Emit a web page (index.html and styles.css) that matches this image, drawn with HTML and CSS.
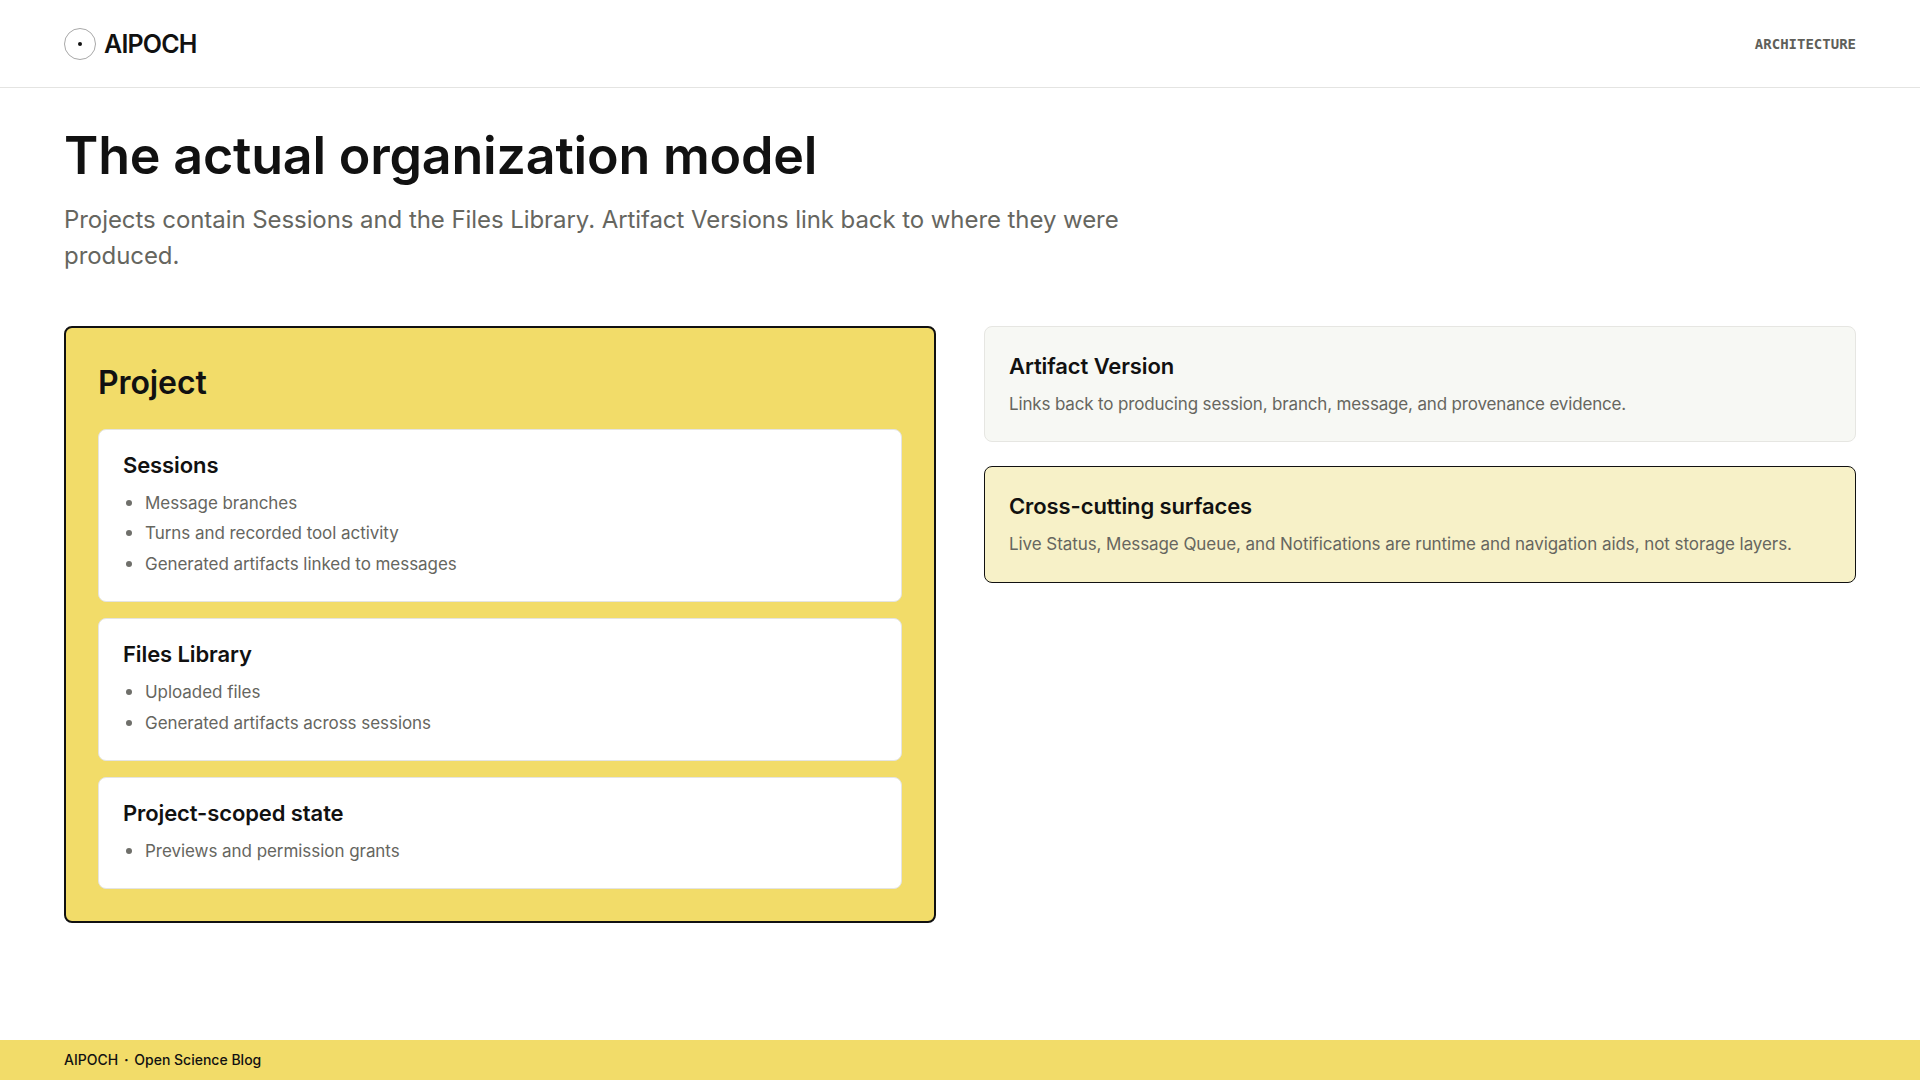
FILE: index.html
```html
<!DOCTYPE html>
<html lang="en">
<head>
<meta charset="utf-8">
<title>AIPOCH - Architecture</title>
<link rel="stylesheet" href="styles.css">
</head>
<body>
<div class="page">
  <header class="topbar">
    <div class="brand">
      <svg class="logo" width="32" height="32" viewBox="0 0 32 32" aria-hidden="true">
        <circle cx="16" cy="16" r="15.5" fill="none" stroke="#a8a8a8" stroke-width="1"/>
        <circle cx="16" cy="16" r="2" fill="#111"/>
      </svg>
      <span class="brand-name">AIPOCH</span>
    </div>
    <span class="section-tag">ARCHITECTURE</span>
  </header>
  <main class="content">
    <h1 class="title">The actual organization model</h1>
    <p class="lead">Projects contain Sessions and the Files Library. Artifact Versions link back to where they were produced.</p>
    <div class="columns">
      <section class="project">
        <h2 class="project-title">Project</h2>
        <div class="stack">
          <article class="inner">
            <h3 class="card-title">Sessions</h3>
            <ul class="list">
              <li>Message branches</li>
              <li>Turns and recorded tool activity</li>
              <li>Generated artifacts linked to messages</li>
            </ul>
          </article>
          <article class="inner">
            <h3 class="card-title">Files Library</h3>
            <ul class="list">
              <li>Uploaded files</li>
              <li>Generated artifacts across sessions</li>
            </ul>
          </article>
          <article class="inner">
            <h3 class="card-title">Project-scoped state</h3>
            <ul class="list">
              <li>Previews and permission grants</li>
            </ul>
          </article>
        </div>
      </section>
      <div class="side">
        <article class="note note-grey">
          <h3 class="card-title">Artifact Version</h3>
          <p class="note-text">Links back to producing session, branch, message, and provenance evidence.</p>
        </article>
        <article class="note note-yellow">
          <h3 class="card-title">Cross-cutting surfaces</h3>
          <p class="note-text">Live Status, Message Queue, and Notifications are runtime and navigation aids, not storage layers.</p>
        </article>
      </div>
    </div>
  </main>
  <footer class="footer">AIPOCH <span class="footer-dot">·</span> Open Science Blog</footer>
</div>
</body>
</html>
```
FILE: styles.css
```css
* { box-sizing: border-box; }
html, body { margin: 0; padding: 0; }
body {
  background: #fff;
  color: #111;
  font-family: Inter, "Noto Sans", "Liberation Sans", sans-serif;
}
.page {
  width: 1920px;
  height: 1080px;
  display: flex;
  flex-direction: column;
  overflow: hidden;
}
.topbar {
  height: 88px;
  flex: none;
  padding: 0 64px;
  display: flex;
  align-items: center;
  justify-content: space-between;
  border-bottom: 1px solid #e4e4e2;
}
.brand { display: flex; align-items: center; gap: 8px; }
.logo { display: block; }
.brand-name { font-size: 25px; font-weight: 600; letter-spacing: -0.8px; }
.section-tag {
  font-family: "DejaVu Sans Mono", "Liberation Mono", monospace;
  font-size: 14px;
  font-weight: 700;
  color: #5f5f5a;
}
.content { flex: 1; padding: 36px 64px 0; }
.title { margin: 0; font-size: 52px; line-height: 64px; font-weight: 600; letter-spacing: -0.2px; }
.lead {
  margin: 14px 0 0;
  max-width: 1100px;
  font-size: 24px;
  line-height: 36px;
  letter-spacing: -0.07px;
  color: #66665f;
}
.columns {
  margin-top: 52px;
  display: grid;
  grid-template-columns: 1fr 1fr;
  gap: 48px;
  align-items: start;
}
.project {
  background: #f2dc69;
  border: 2px solid #111;
  border-radius: 8px;
  padding: 32px;
}
.project-title { margin: 0 0 23px; font-size: 32px; line-height: 46px; font-weight: 600; letter-spacing: -0.1px; }
.stack { display: flex; flex-direction: column; gap: 16px; }
.inner {
  background: #fff;
  border: 1px solid #e4e4e2;
  border-radius: 8px;
  padding: 20px 24px 22px;
}
.card-title { margin: 0; font-size: 22px; line-height: 30px; font-weight: 600; letter-spacing: -0.1px; }
.list {
  margin: 8px 0 0;
  padding: 0 0 0 22px;
  list-style: none;
  font-size: 17px;
  line-height: 30.4px;
  letter-spacing: -0.05px;
  color: #66665f;
}
.list li { position: relative; }
.list li::before {
  content: "";
  position: absolute;
  left: -19px;
  top: 12px;
  width: 6px;
  height: 6px;
  border-radius: 50%;
  background: #6f6f6a;
}
.side { display: flex; flex-direction: column; gap: 24px; }
.note {
  height: 116.4px;
  border-radius: 8px;
  padding: 24px;
}
.note-grey { background: #f7f8f4; border: 1px solid #e6e6e2; }
.note-yellow { background: #f7f1c8; border: 1px solid #111; }
.note-text { margin: 10px 0 0; font-size: 17px; line-height: 26px; color: #66665f; }
.note-grey .note-text { letter-spacing: -0.16px; }
.note-yellow .note-text { letter-spacing: -0.07px; }
.footer {
  height: 40px;
  flex: none;
  background: #f2dc69;
  padding: 0 64px 1px;
  display: flex;
  align-items: center;
  white-space: pre;
  font-size: 14px;
  font-weight: 500;
  color: #111;
}
.footer-dot { font-weight: 700; margin: 0 2px; }
```
